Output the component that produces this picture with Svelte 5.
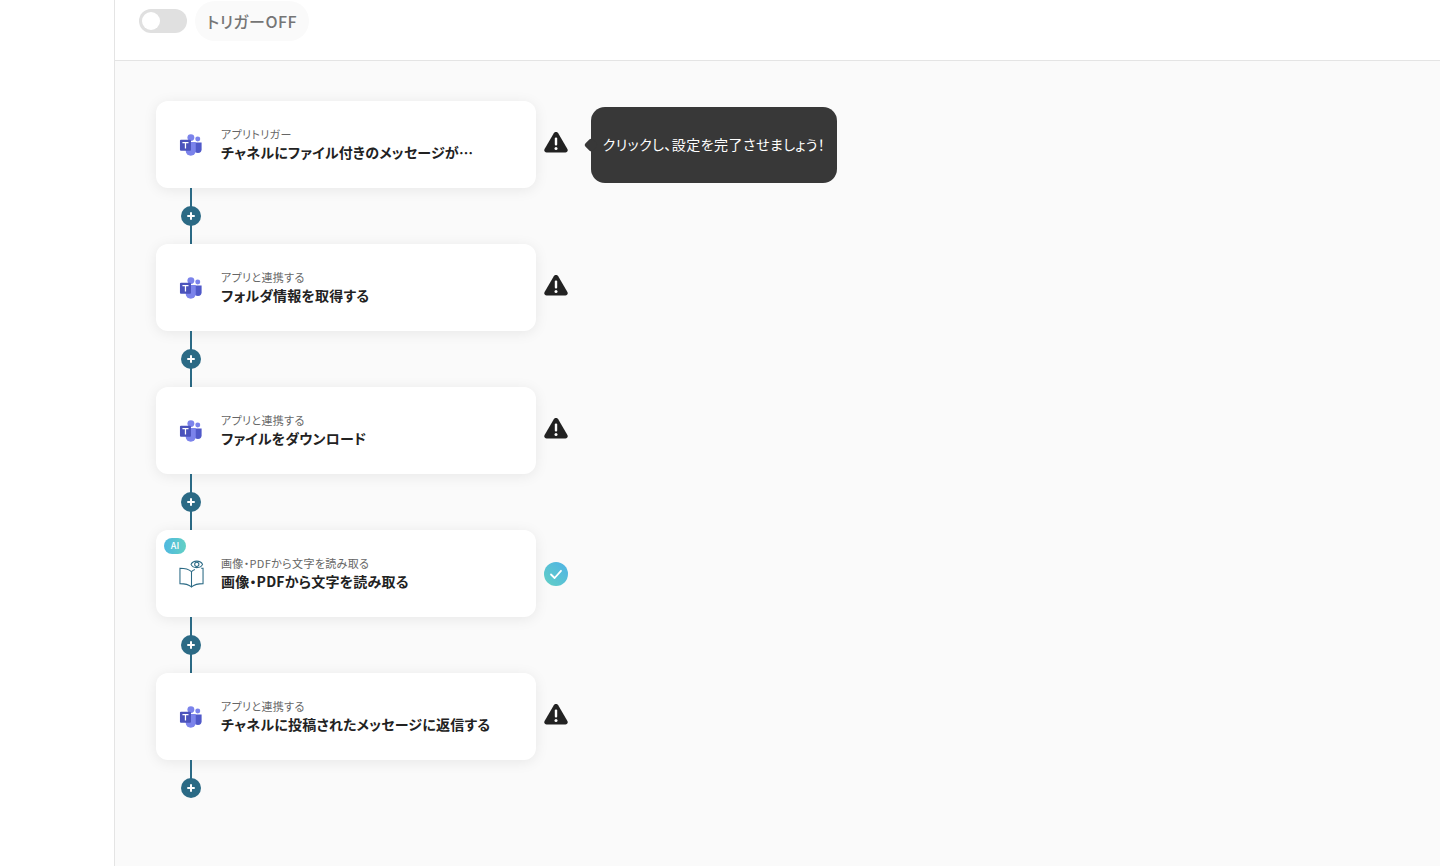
<script>
  const steps = [
    { kind: "teams", label: "アプリトリガー", title: "チャネルにファイル付きのメッセージが…", status: "warn", tip: true },
    { kind: "teams", label: "アプリと連携する", title: "フォルダ情報を取得する", status: "warn" },
    { kind: "teams", label: "アプリと連携する", title: "ファイルをダウンロード", status: "warn" },
    { kind: "ocr", label: "画像・PDFから文字を読み取る", title: "画像・PDFから文字を読み取る", status: "ok" },
    { kind: "teams", label: "アプリと連携する", title: "チャネルに投稿されたメッセージに返信する", status: "warn" }
  ];
</script>

<div class="page">
  <aside class="side"></aside>
  <main class="main">
    <header class="top">
      <span class="toggle"><span class="knob"></span></span>
      <span class="pill">トリガーOFF</span>
    </header>
    <section class="flow">
      {#each steps as step, i}
        <div class="row">
          <div class="card">
            {#if step.kind === "ocr"}
              <span class="ai">AI</span>
              <svg class="icon book" viewBox="0 0 26 30" fill="none" stroke="#2b6a85" stroke-width="1.100">
                <path d="M13 29 C10 26.500 6 25.500 1 25.500 V9.500 C6 9.500 10 10.500 13 13 V29 C16 26.500 20 25.500 25 25.500 V9.500 H23" />
                <path d="M13 13 C14 12 15 11.300 16.500 10.800" />
                <path d="M12.500 5.500 C14.500 1 22.500 1 24.500 5.500 C22.500 10 14.500 10 12.500 5.500 Z" />
                <circle cx="18.500" cy="5.500" r="2.200" />
              </svg>
            {:else}
              <svg class="icon" viewBox="0 0 24 24">
                <circle cx="19.600" cy="6.300" r="2.600" fill="#7b83eb" />
                <path d="M16 10 h7.600 v7 a3.800 3.800 0 0 1 -7.600 0 z" fill="#5059c9" />
                <circle cx="12.400" cy="4.800" r="3.600" fill="#7b83eb" />
                <path d="M7 9.500 h10.500 v9 a5.250 5.250 0 0 1 -10.500 0 z" fill="#7b83eb" />
                <rect x="1" y="7" width="11.500" height="11.500" rx="1" fill="#4b53bc" />
                <path d="M3.600 9.500 h6.300 v1.200 h-2.500 v5.500 h-1.300 v-5.500 h-2.500 z" fill="#fff" />
              </svg>
            {/if}
            <div class="text">
              <p class="label">{step.label}</p>
              <p class="title">{step.title}</p>
            </div>
          </div>
          <div class="status">
            {#if step.status === "warn"}
              <svg class="warn" viewBox="0 0 24 22">
                <path d="M12 1 C13 1 13.700 1.500 14.200 2.300 L23.400 18 C24.400 19.800 23.200 21.500 21.400 21.500 H2.600 C0.800 21.500 -0.400 19.800 0.600 18 L9.800 2.300 C10.300 1.500 11 1 12 1 Z" fill="#222" />
                <rect x="10.800" y="6.500" width="2.400" height="8" rx="1.100" fill="#fff" />
                <circle cx="12" cy="17.400" r="1.500" fill="#fff" />
              </svg>
            {:else}
              <span class="check">
                <svg viewBox="0 0 24 24" fill="none" stroke="#fff" stroke-width="1.800" stroke-linecap="round" stroke-linejoin="round">
                  <path d="M7 12.500 L10.600 16 L17 8.800" />
                </svg>
              </span>
            {/if}
            {#if step.tip}
              <div class="tip">クリックし、設定を完了させましょう！</div>
            {/if}
          </div>
        </div>
        <div class="link" class:last={i === steps.length - 1}>
          <span class="plus"></span>
        </div>
      {/each}
    </section>
  </main>
</div>

<style>
  :global(body) {
    margin: 0;
    background: #fff;
  }
  .page {
    display: flex;
    height: 866px;
    overflow: hidden;
    font-family: "Noto Sans CJK JP", "Noto Sans", sans-serif;
    font-feature-settings: "palt";
    color: #222;
  }
  .side {
    width: 114px;
    flex: none;
    background: #fff;
    border-right: 1px solid #e4e4e4;
  }
  .main {
    flex: 1;
    min-width: 0;
    background: #fafafa;
  }
  .top {
    height: 61px;
    box-sizing: border-box;
    background: #fff;
    border-bottom: 1px solid #e4e4e4;
    display: flex;
    align-items: flex-start;
    gap: 8px;
    padding: 1px 0 0 24px;
  }
  .toggle {
    width: 48px;
    height: 24px;
    margin-top: 8px;
    border-radius: 12px;
    background: #e0e0e0;
    display: flex;
    align-items: center;
    padding-left: 3px;
    box-sizing: border-box;
  }
  .knob {
    width: 18px;
    height: 18px;
    border-radius: 50%;
    background: #fff;
  }
  .pill {
    height: 40px;
    padding: 0 12px;
    border-radius: 20px;
    background: #fafafa;
    color: #757575;
    font-size: 16px;
    font-weight: 500;
    line-height: 40px;
    letter-spacing: 0.03em;
  }
  .flow {
    padding: 40px 0 0 41px;
  }
  .row {
    display: flex;
    align-items: center;
  }
  .card {
    position: relative;
    width: 380px;
    height: 87px;
    box-sizing: border-box;
    padding: 0 40px 0 23px;
    background: #fff;
    border-radius: 12px;
    box-shadow: 0 2px 14px rgba(0, 0, 0, 0.08);
    display: flex;
    align-items: center;
    gap: 19px;
  }
  .icon {
    width: 23px;
    height: 23px;
    flex: none;
  }
  .book {
    width: 25px;
    height: 29px;
    margin-right: -2px;
  }
  .ai {
    position: absolute;
    left: 8px;
    top: 8px;
    width: 22px;
    height: 16px;
    border-radius: 8px;
    background: linear-gradient(90deg, #4fb8e0, #62d0c4);
    color: #fff;
    font-size: 9px;
    font-weight: 500;
    line-height: 16px;
    text-align: center;
  }
  .text {
    min-width: 0;
    flex: 1;
    padding-bottom: 1px;
  }
  .label {
    margin: 0;
    color: #666;
    font-size: 11px;
    line-height: 16px;
    letter-spacing: 0.35px;
  }
  .title {
    margin: 0;
    font-size: 14px;
    font-weight: 700;
    line-height: 21px;
    letter-spacing: 0.2px;
    white-space: nowrap;
  }
  .status {
    position: relative;
    margin-left: 8px;
    width: 24px;
    height: 24px;
  }
  .warn {
    display: block;
    width: 24px;
    height: 22px;
    margin-top: -2px;
  }
  .check {
    display: block;
    width: 24px;
    height: 24px;
    border-radius: 50%;
    background: linear-gradient(45deg, #62d0c4, #4fb2e6);
  }
  .check svg {
    display: block;
  }
  .tip {
    position: absolute;
    left: 47px;
    top: -26px;
    width: 246px;
    height: 76px;
    box-sizing: border-box;
    background: #383838;
    border-radius: 14px;
    color: #fff;
    font-size: 14px;
    line-height: 74px;
    letter-spacing: 0.45px;
    text-align: center;
    white-space: nowrap;
  }
  .tip::before {
    content: "";
    position: absolute;
    left: -5px;
    top: 33px;
    width: 10px;
    height: 10px;
    background: #383838;
    transform: rotate(45deg);
    border-radius: 2px;
  }
  .link {
    position: relative;
    width: 70px;
    height: 56px;
    display: flex;
    align-items: center;
    justify-content: center;
  }
  .link::before {
    content: "";
    position: absolute;
    left: 34px;
    top: 0;
    bottom: 0;
    width: 2px;
    background: #2b6a85;
  }
  .link.last {
    height: 38px;
    align-items: flex-end;
  }
  .link.last::before {
    bottom: 10px;
  }
  .plus {
    position: relative;
    width: 20px;
    height: 20px;
    border-radius: 50%;
    background: #2b6a85;
  }
  .plus::before,
  .plus::after {
    content: "";
    position: absolute;
    background: #fff;
    border-radius: 1px;
  }
  .plus::before {
    left: 6px;
    top: 9px;
    width: 8px;
    height: 2px;
  }
  .plus::after {
    left: 9px;
    top: 6px;
    width: 2px;
    height: 8px;
  }
</style>
